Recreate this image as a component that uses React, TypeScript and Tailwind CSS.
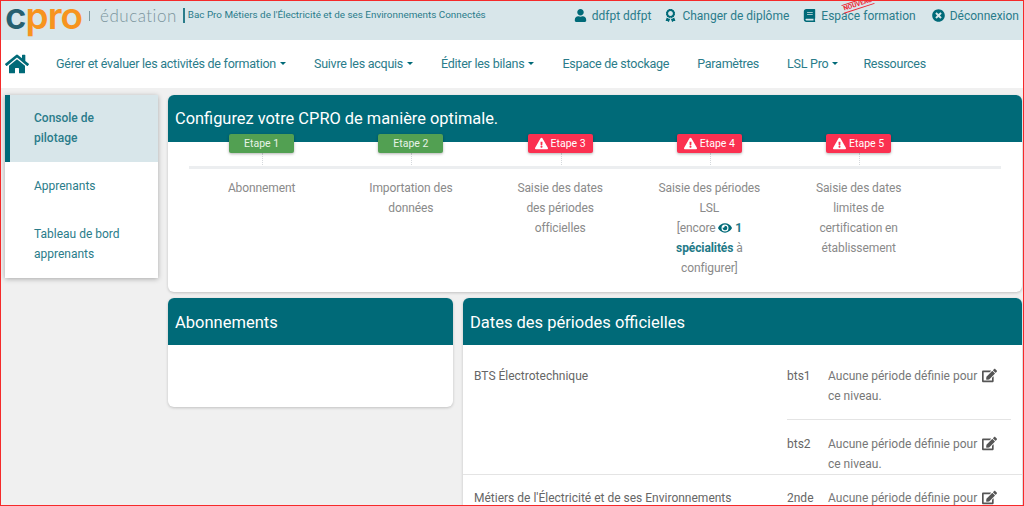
import { FaUser, FaAward, FaBook, FaTimesCircle, FaHome, FaExclamationTriangle, FaEye, FaEdit } from "react-icons/fa";

const font = "font-['Roboto',sans-serif]";

function Caret() {
  return <span className="ml-1 inline-block w-0 h-0 align-[3px] border-x-[3px] border-x-transparent border-t-[3px] border-t-[#006a78]" />;
}

function TopLink({ icon, label, className }: { icon: React.ReactNode; label: string; className?: string }) {
  return (
    <a className={"flex items-center gap-[5px] whitespace-nowrap text-[#2a7c8a] text-[12px] " + (className ?? "")}>
      <span className="text-[#006a78] text-[13px]">{icon}</span>
      {label}
    </a>
  );
}

function Step({ label, ok, children }: { label: string; ok?: boolean; children: React.ReactNode }) {
  return (
    <div className="w-[149.25px] shrink-0 flex flex-col items-center">
      <div className={"h-[19px] w-[65px] -mt-[8px] z-10 -translate-x-[1px] flex items-center justify-center gap-[3px] rounded-[2px] whitespace-nowrap text-[10.5px] shadow-[0_1px_3px_rgba(0,0,0,0.3)] " + (ok ? "bg-[#52a052] text-[#e8f3e8]" : "bg-[#fb3050] text-white")}>
        {!ok && <FaExclamationTriangle className="text-[13px] text-white" />}
        {label}
      </div>
      <div className="h-[14px] border-l border-dotted border-[#d4d8dc]" />
      <div className="mt-[11px] w-[106px] -translate-x-[1px] text-center text-[12px] tracking-[-0.1px] leading-[20px] text-[#8a8a8a]">{children}</div>
    </div>
  );
}

function PeriodRow({ level, last }: { level: string; last?: boolean }) {
  return (
    <div className={"flex ml-[324px] mr-[11px] " + (last ? "" : "border-b border-[#e4e4e4] pb-[13px] mb-[14px]")}>
      <div className="w-[41px] text-[12px] leading-[20px] text-[#666]">{level}</div>
      <div className="w-[183px] text-[12px] leading-[20px] text-[#777]">
        Aucune période définie pour <FaEdit className="inline text-[15px] text-[#555] -mt-[2px] ml-[2px]" />
        <br />
        ce niveau.
      </div>
    </div>
  );
}

export default function App() {
  return (
    <div className={"h-[506px] w-[1024px] overflow-hidden border border-[#f52a2a] bg-[#f0f0f0] flex flex-col " + font}>
      {/* Top bar */}
      <header className="h-[39px] shrink-0 bg-[#d8e6ea] flex items-center pl-[4px] pr-[4px] pb-[10px]">
        <div className="flex items-baseline font-['Inter',sans-serif] font-semibold text-[37px] leading-[26px] tracking-[-1px]">
          <span className="text-[#27606f]">c</span>
          <span className="text-[#f7941e]">pro</span>
        </div>
        <span className="ml-[7px] h-[10px] border-l border-[#7d9aa2]" />
        <span className="ml-[10px] text-[17px] tracking-[0.5px] text-[#7b959d] font-['Lato',sans-serif] font-light whitespace-nowrap">éducation</span>
        <span className="ml-[6px] h-[15px] border-l-2 border-[#2a7c8a]" />
        <span className="ml-[3px] text-[9.9px] text-[#2a7c8a] whitespace-nowrap">Bac Pro Métiers de l'Électricité et de ses Environnements Connectés</span>
        <nav className="ml-auto flex items-center">
          <TopLink icon={<FaUser />} label="ddfpt ddfpt" />
          <TopLink icon={<FaAward />} label="Changer de diplôme" className="ml-[13px]" />
          <div className="relative ml-[14px]">
            <TopLink icon={<FaBook />} label="Espace formation" />
            <div className="absolute left-[39px] -top-[7px] w-[32px] h-[9px] -rotate-[18deg] border-y border-[#e23] text-[6.5px] leading-[7px] text-center text-[#e23] font-bold overflow-hidden">NOUVEAU</div>
          </div>
          <TopLink icon={<FaTimesCircle />} label="Déconnexion" className="ml-[16px]" />
        </nav>
      </header>

      {/* Menu */}
      <nav className="h-[48px] shrink-0 bg-white flex items-center pl-[4px] text-[12.5px] tracking-[-0.25px] text-[#2a7c8a] whitespace-nowrap">
        <FaHome className="text-[24px] text-[#006a78]" />
        <div className="ml-[27px] flex gap-[28px]">
          <a>Gérer et évaluer les activités de formation<Caret /></a>
          <a>Suivre les acquis<Caret /></a>
          <a>Éditer les bilans<Caret /></a>
          <a>Espace de stockage</a>
          <a>Paramètres</a>
          <a>LSL Pro<Caret /></a>
          <a className="-ml-[3px]">Ressources</a>
        </div>
      </nav>

      {/* Body */}
      <main className="flex-1 min-h-0 flex items-start gap-[10px] pl-[4px] pt-[7px]">
        <aside className="w-[153px] shrink-0 bg-white shadow-[0_1px_5px_rgba(0,0,0,0.3)] text-[12px] leading-[20px] text-[#2a7c8a]">
          <div className="h-[67px] bg-[#d8e6ea] border-l-[5px] border-[#006a78] pl-[24px] pt-[13px] font-medium">Console de<br />pilotage</div>
          <div className="pl-[29px] pt-[14px] h-[47px]">Apprenants</div>
          <div className="pl-[29px] pt-[15px] pb-[14px]">Tableau de bord<br />apprenants</div>
        </aside>

        <div className="w-[854px] shrink-0 flex flex-col gap-[6px]">
          <section className="h-[197px] bg-white rounded-md shadow-[0_1px_3px_rgba(0,0,0,0.2)]">
            <div className="h-[47px] bg-[#006a78] rounded-t-md px-[7px] pt-[12px] text-[16.4px] leading-[24px] text-white">Configurez votre CPRO de manière optimale.</div>
            <div className="relative flex pl-[20px]">
              <div className="absolute left-[21px] right-[21px] top-[24px] h-[3px] bg-[#eceef0]" />
              <Step label="Etape 1" ok>Abonnement</Step>
              <Step label="Etape 2" ok>Importation des données</Step>
              <Step label="Etape 3">Saisie des dates des périodes officielles</Step>
              <Step label="Etape 4">
                Saisie des périodes LSL<br />[encore <FaEye className="inline text-[14px] text-[#006a78] -mt-[2px]" /> <b className="font-bold text-[#1f7a88]">1 spécialités</b> à configurer]
              </Step>
              <Step label="Etape 5">Saisie des dates limites de certification en établissement</Step>
            </div>
          </section>

          <div className="flex items-start gap-[10px]">
            <section className="w-[285px] h-[109px] shrink-0 bg-white rounded-md shadow-[0_1px_3px_rgba(0,0,0,0.2)]">
              <div className="h-[47px] bg-[#006a78] rounded-t-md px-[7px] pt-[13px] text-[16.5px] leading-[24px] text-white">Abonnements</div>
            </section>
            <section className="w-[559px] h-[300px] shrink-0 bg-white rounded-t-md shadow-[0_1px_3px_rgba(0,0,0,0.2)]">
              <div className="h-[47px] bg-[#006a78] rounded-t-md px-[7px] pt-[13px] text-[16.5px] leading-[24px] text-white">Dates des périodes officielles</div>
              <div className="relative pt-[21px]">
                <div className="absolute left-[11px] top-[21px] text-[12px] leading-[20px] text-[#666]">BTS Électrotechnique</div>
                <PeriodRow level="bts1" />
                <PeriodRow level="bts2" last />
                <div className="flex border-t border-[#e4e4e4] pt-[13px] text-[12px] leading-[20px]">
                  <div className="w-[324px] pl-[11px] text-[#666]">Métiers de l'Électricité et de ses Environnements</div>
                  <div className="w-[41px] text-[#666]">2nde</div>
                  <div className="text-[#777] whitespace-nowrap">Aucune période définie pour <FaEdit className="inline text-[15px] text-[#555] -mt-[2px] ml-[2px]" /></div>
                </div>
              </div>
            </section>
          </div>
        </div>
      </main>
    </div>
  );
}
